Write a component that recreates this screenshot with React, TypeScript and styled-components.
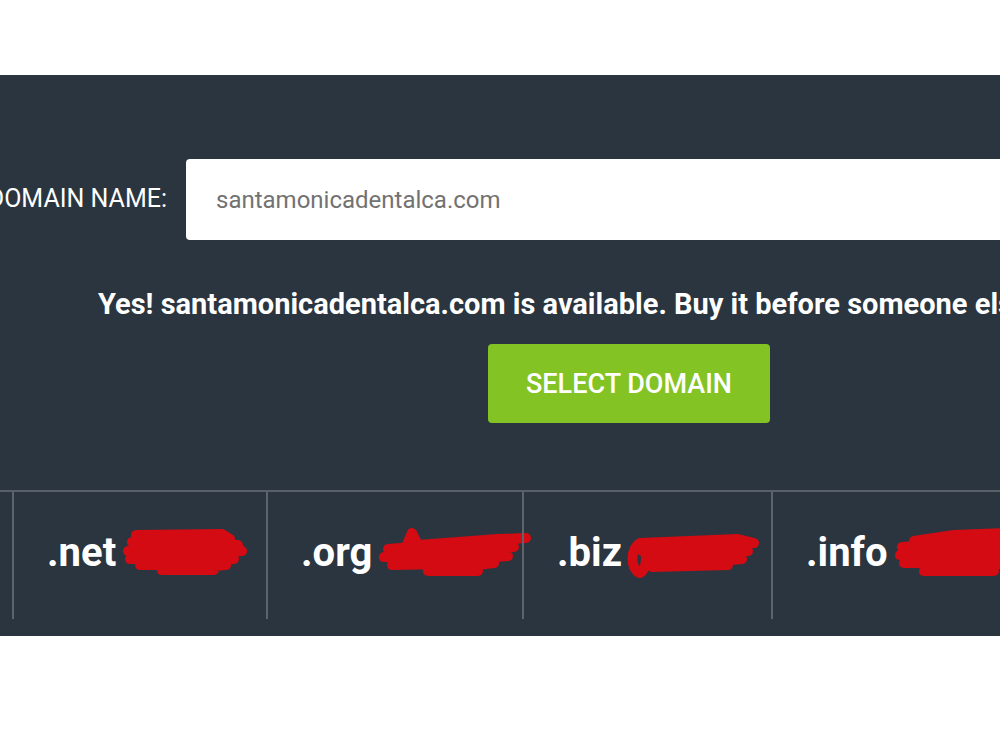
import styled, { createGlobalStyle } from 'styled-components'

const GlobalStyle = createGlobalStyle`
  html, body {
    margin: 0;
    padding: 0;
    background: #ffffff;
    font-family: Roboto, "Liberation Sans", Arial, sans-serif;
  }
`

const Page = styled.div`
  width: 1000px;
  height: 750px;
  padding-top: 75px;
  box-sizing: border-box;
  overflow: hidden;
`

const Panel = styled.section`
  background: #2a353f;
  padding-top: 84px;
  padding-bottom: 17px;
  overflow: hidden;
`

const Inner = styled.div`
  width: 1258px;
  display: flex;
  flex-direction: column;
  align-items: center;
`

const FormRow = styled.div`
  align-self: stretch;
  display: flex;
  align-items: center;
  gap: 19px;
  height: 81px;
`

const Label = styled.label`
  width: 167px;
  flex: none;
  display: flex;
  justify-content: flex-end;
  white-space: nowrap;
  color: #ffffff;
  font-size: 25px;
  font-weight: 400;
  margin-top: -3px;
`

const DomainInput = styled.input`
  flex: 1;
  height: 81px;
  box-sizing: border-box;
  border: none;
  border-radius: 4px;
  background: #ffffff;
  padding: 0 30px;
  font-family: Roboto, "Liberation Sans", Arial, sans-serif;
  font-size: 24px;
  color: #727272;
  outline: none;
`

const Message = styled.p`
  align-self: flex-start;
  margin: 47px 0 0;
  padding-left: 98px;
  white-space: nowrap;
  color: #ffffff;
  font-size: 29px;
  font-weight: 700;
  line-height: 34px;
`

const SelectButton = styled.button`
  margin-top: 23px;
  width: 282px;
  height: 79px;
  border: none;
  border-radius: 4px;
  background: #84c324;
  color: #ffffff;
  font-family: Roboto, "Liberation Sans", Arial, sans-serif;
  font-size: 27px;
  font-weight: 500;
  text-transform: uppercase;
  cursor: pointer;
`

const TldRow = styled.div`
  margin-top: 67px;
  margin-left: -241px;
  width: 1500px;
  border-top: 2px solid #596068;
  display: flex;
`

const TldCell = styled.div<{ $first?: boolean; $w: number }>`
  width: ${(p) => p.$w}px;
  height: 127px;
  flex: none;
  box-sizing: border-box;
  border-left: ${(p) => (p.$first ? 'none' : '2px solid #5d646b')};
  display: flex;
  align-items: center;
  padding: 0 0 5px 33px;
`

const TldName = styled.span`
  color: #ffffff;
  font-size: 40px;
  font-weight: 700;
  line-height: 1;
  white-space: nowrap;
`

const Scribble = styled.svg`
  flex: none;
  margin-left: 6px;
  overflow: visible;
`

const scribbles: Record<string, { w: number; d: string }> = {
  net: {
    w: 124,
    d: 'M14 6 L100 5 L108 10 L10 13 L116 16 L6 22 L120 22 L8 30 L112 30 L18 36 L104 36 L40 41 L92 41',
  },
  org: {
    w: 150,
    d: 'M28 18 L34 4 L40 16 L120 10 L148 9 L10 20 L136 18 L6 28 L130 27 L14 36 L116 34 L50 42 L100 42',
  },
  biz: {
    w: 130,
    d: 'M12 14 C2 20 2 40 12 44 C20 40 20 18 12 14 L110 10 L126 14 L14 22 L120 22 L18 30 L114 30 L24 38 L100 36',
  },
  info: {
    w: 120,
    d: 'M20 12 L60 6 L110 4 L118 10 L8 18 L120 16 L6 26 L120 26 L10 34 L118 34 L30 42 L100 42',
  },
}

const tlds = [
  { name: '', key: '', w: 253 },
  { name: '.net', key: 'net', w: 254 },
  { name: '.org', key: 'org', w: 256 },
  { name: '.biz', key: 'biz', w: 249 },
  { name: '.info', key: 'info', w: 254 },
]

const App = () => {
  return (
    <Page>
      <GlobalStyle />
      <Panel>
        <Inner>
          <FormRow>
            <Label htmlFor="domain">DOMAIN NAME:</Label>
            <DomainInput id="domain" readOnly value="santamonicadentalca.com" />
          </FormRow>
          <Message>
            Yes! santamonicadentalca.com is available. Buy it before someone else does!
          </Message>
          <SelectButton>Select Domain</SelectButton>
        </Inner>
        <TldRow>
          {tlds.map((t, i) => {
            const s = scribbles[t.key]
            return (
              <TldCell key={i} $first={i === 0} $w={t.w}>
                {t.name && <TldName>{t.name}</TldName>}
                {s && (
                  <Scribble width={s.w} height="48" viewBox={`0 0 ${s.w} 48`}>
                    <path
                      d={s.d}
                      fill="none"
                      stroke="#d40b13"
                      strokeWidth="10"
                      strokeLinecap="round"
                      strokeLinejoin="round"
                    />
                  </Scribble>
                )}
              </TldCell>
            )
          })}
        </TldRow>
      </Panel>
    </Page>
  )
}

export default App
